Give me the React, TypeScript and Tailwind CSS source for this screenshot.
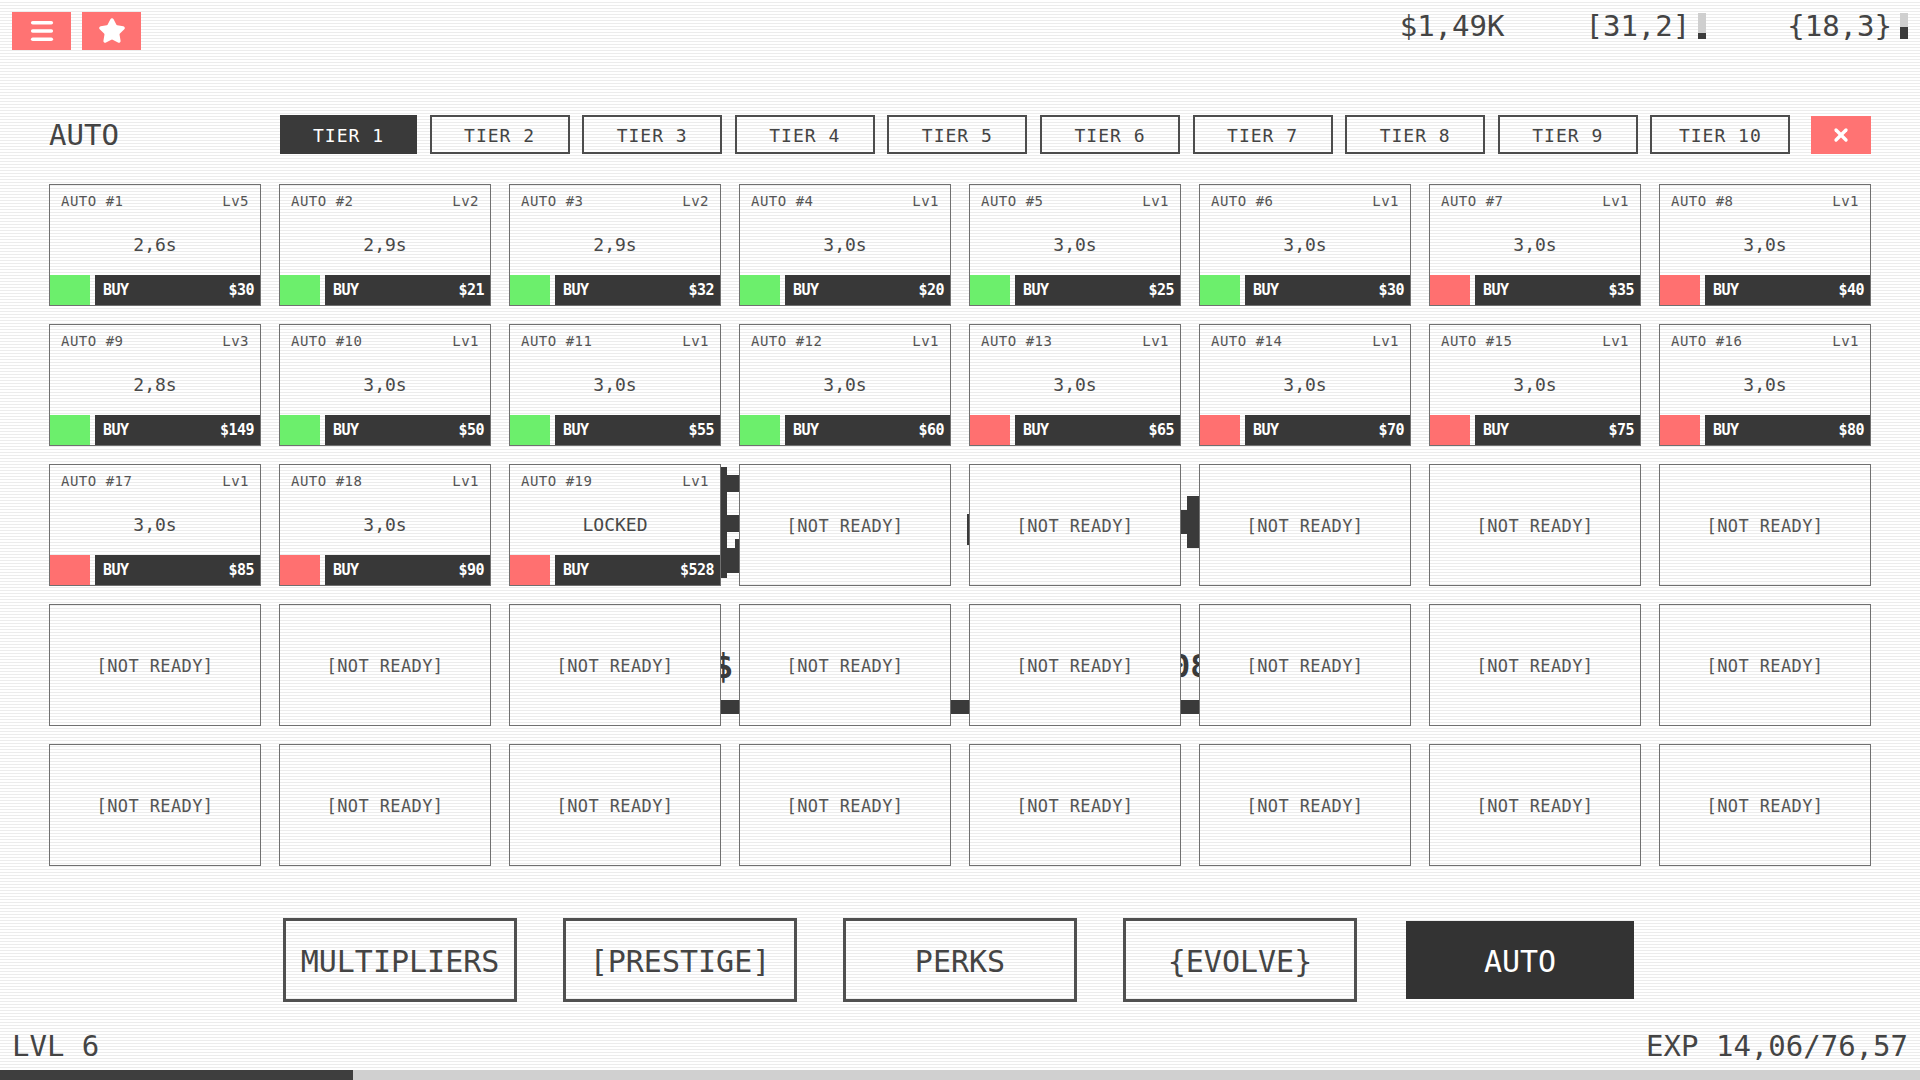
import React from "react";
import { Menu, Star, X } from "lucide-react";

// scanline backdrop, fixed so cards line up with the page
const SCAN =
  "bg-fixed bg-[image:repeating-linear-gradient(180deg,#ffffff_0px,#ffffff_2px,#ececec_2px,#ececec_3px)]";

type Auto = {
  id: number;
  lv: number;
  time: string;
  ok: boolean;
  price: number;
  locked?: boolean;
};

const AUTOS: Auto[] = [
  { id: 1, lv: 5, time: "2,6s", ok: true, price: 30 },
  { id: 2, lv: 2, time: "2,9s", ok: true, price: 21 },
  { id: 3, lv: 2, time: "2,9s", ok: true, price: 32 },
  { id: 4, lv: 1, time: "3,0s", ok: true, price: 20 },
  { id: 5, lv: 1, time: "3,0s", ok: true, price: 25 },
  { id: 6, lv: 1, time: "3,0s", ok: true, price: 30 },
  { id: 7, lv: 1, time: "3,0s", ok: false, price: 35 },
  { id: 8, lv: 1, time: "3,0s", ok: false, price: 40 },
  { id: 9, lv: 3, time: "2,8s", ok: true, price: 149 },
  { id: 10, lv: 1, time: "3,0s", ok: true, price: 50 },
  { id: 11, lv: 1, time: "3,0s", ok: true, price: 55 },
  { id: 12, lv: 1, time: "3,0s", ok: true, price: 60 },
  { id: 13, lv: 1, time: "3,0s", ok: false, price: 65 },
  { id: 14, lv: 1, time: "3,0s", ok: false, price: 70 },
  { id: 15, lv: 1, time: "3,0s", ok: false, price: 75 },
  { id: 16, lv: 1, time: "3,0s", ok: false, price: 80 },
  { id: 17, lv: 1, time: "3,0s", ok: false, price: 85 },
  { id: 18, lv: 1, time: "3,0s", ok: false, price: 90 },
  { id: 19, lv: 1, time: "", ok: false, price: 528, locked: true },
];

const TOTAL_SLOTS = 40;
const TIERS = Array.from({ length: 10 }, (_, i) => i + 1);
const NAV = ["MULTIPLIERS", "[PRESTIGE]", "PERKS", "{EVOLVE}", "AUTO"];

function AutoCard({ a }: { a: Auto }) {
  return (
    <div className={`relative z-10 h-[122px] border border-[#707070] flex flex-col ${SCAN}`}>
      <div className="flex justify-between px-[11px] pt-[7px] text-[14px] tracking-[0.5px] text-[#555] leading-[18px]">
        <span>AUTO #{a.id}</span>
        <span>Lv{a.lv}</span>
      </div>
      <div className="flex-1 flex items-center justify-center pt-[4px] text-[18px] text-[#484848]">
        {a.locked ? "LOCKED" : a.time}
      </div>
      <div className="flex h-[30px]">
        <div className={a.ok ? "w-[40px] bg-[#6cef6c]" : "w-[40px] bg-[#ff7070]"} />
        <div className="ml-[5px] flex-1 bg-[#383838] flex items-center justify-between pl-[8px] pr-[6px] pt-[1px] text-[15px] font-bold text-white tracking-[-0.5px]">
          <span>BUY</span>
          <span>${a.price}</span>
        </div>
      </div>
    </div>
  );
}

function EmptyCard() {
  return (
    <div className={`relative z-10 h-[122px] border border-[#707070] flex items-center justify-center pt-[4px] text-[17px] tracking-[0.4px] text-[#555] ${SCAN}`}>
      [NOT READY]
    </div>
  );
}

function Meter({ fill }: { fill: number }) {
  return (
    <div className="w-[8px] h-[26px] bg-[#cfcfcf] flex flex-col justify-end">
      <div className="bg-[#3c3c3c]" style={{ height: fill }} />
    </div>
  );
}

export default function App() {
  const slots = Array.from({ length: TOTAL_SLOTS }, (_, i) => AUTOS[i]);

  return (
    <div
      className={`w-[1920px] h-[1080px] overflow-hidden flex flex-col text-[#444] font-['DejaVu_Sans_Mono','Liberation_Mono',monospace] ${SCAN}`}
    >
      {/* top bar */}
      <div className="flex justify-between items-start px-[12px] pt-[12px]">
        <div className="flex gap-[11px]">
          <button className="w-[59px] h-[38px] bg-[#ff7373] flex items-center justify-center">
            <Menu className="w-[28px] h-[28px] text-white" strokeWidth={3} />
          </button>
          <button className="w-[59px] h-[38px] bg-[#ff7373] flex items-center justify-center">
            <Star className="w-[28px] h-[28px] text-white" fill="white" strokeWidth={2} />
          </button>
        </div>
        <div className="flex items-center gap-[81px] text-[29px] leading-[30px] -mt-[1px]">
          <span>$1,49K</span>
          <div className="flex items-center gap-[8px]">
            <span>[31,2]</span>
            <Meter fill={6} />
          </div>
          <div className="flex items-center gap-[8px]">
            <span>{"{18,3}"}</span>
            <Meter fill={12} />
          </div>
        </div>
      </div>

      {/* panel */}
      <div className="px-[49px] mt-[65px]">
        <div className="flex items-center h-[39px]">
          <div className="w-[231px] text-[29px] text-[#444] pt-[3px]">AUTO</div>
          <div className="flex gap-[12.6px]">
            {TIERS.map((t) =>
              t === 1 ? (
                <div
                  key={t}
                  className="w-[137px] h-[39px] bg-[#3a3a3a] text-white flex items-center justify-center pt-[2px] text-[18px] tracking-[1px]"
                >
                  TIER {t}
                </div>
              ) : (
                <div
                  key={t}
                  className="w-[140px] h-[39px] border-2 border-[#4d4d4d] flex items-center justify-center pt-[2px] text-[18px] tracking-[1px] text-[#444]"
                >
                  TIER {t}
                </div>
              )
            )}
          </div>
          <button className="ml-auto w-[60px] h-[38px] bg-[#ff7373] flex items-center justify-center">
            <X className="w-[20px] h-[20px] text-white" strokeWidth={4} />
          </button>
        </div>

        <div className="relative mt-[30px] w-[1822px] grid grid-cols-8 gap-[18px]">
          {/* ghost glyphs showing through the gaps */}
          <div className="absolute inset-0 z-0 pointer-events-none">
            <div className="absolute left-[672px] top-[283px] w-[6px] h-[111px] bg-[#3a3a3a]" />
            <div className="absolute left-[672px] top-[291px] w-[18px] h-[17px] bg-[#3a3a3a]" />
            <div className="absolute left-[672px] top-[331px] w-[18px] h-[17px] bg-[#3a3a3a]" />
            <div className="absolute left-[686px] top-[355px] w-[4px] h-[9px] bg-[#3a3a3a]" />
            <div className="absolute left-[672px] top-[364px] w-[18px] h-[25px] bg-[#3a3a3a]" />
            <div className="absolute left-[1138px] top-[312px] w-[12px] h-[52px] bg-[#3a3a3a]" />
            <div className="absolute left-[1132px] top-[326px] w-[18px] h-[24px] bg-[#3a3a3a]" />
            <div className="absolute left-[918px] top-[330px] w-[2px] h-[31px] bg-[#3a3a3a]" />
            <span className="absolute left-[664px] top-[462px] text-[34px] leading-[40px] font-bold text-[#3a3a3a]">$</span>
            <span className="absolute left-[1122px] top-[462px] text-[32px] leading-[40px] font-bold text-[#3a3a3a]">08</span>
            <div className="absolute left-[672px] top-[516px] w-[18px] h-[14px] bg-[#3a3a3a]" />
            <div className="absolute left-[902px] top-[516px] w-[18px] h-[14px] bg-[#3a3a3a]" />
            <div className="absolute left-[1132px] top-[516px] w-[18px] h-[14px] bg-[#3a3a3a]" />
          </div>
          {slots.map((a, i) => (a ? <AutoCard key={i} a={a} /> : <EmptyCard key={i} />))}
        </div>
      </div>

      {/* bottom nav */}
      <div className="mt-[52px] flex justify-center gap-[46px]">
        {NAV.map((n) =>
          n === "AUTO" ? (
            <div
              key={n}
              className="w-[234px] h-[84px] border-[3px] border-transparent bg-clip-padding bg-[#333333] text-white flex items-center justify-center pt-[2px] text-[30px]"
            >
              {n}
            </div>
          ) : (
            <div
              key={n}
              className="w-[234px] h-[84px] border-[3px] border-[#505050] flex items-center justify-center pt-[2px] text-[30px] text-[#444]"
            >
              {n}
            </div>
          )
        )}
      </div>

      <div className="mt-auto flex justify-between items-end px-[12px] pb-[7px] text-[29px] leading-[34px]">
        <span>LVL 6</span>
        <span>EXP 14,06/76,57</span>
      </div>
      <div className="h-[10px] bg-[#d0d0d0] flex">
        <div className="w-[353px] bg-[#3e3e3e]" />
      </div>
    </div>
  );
}
